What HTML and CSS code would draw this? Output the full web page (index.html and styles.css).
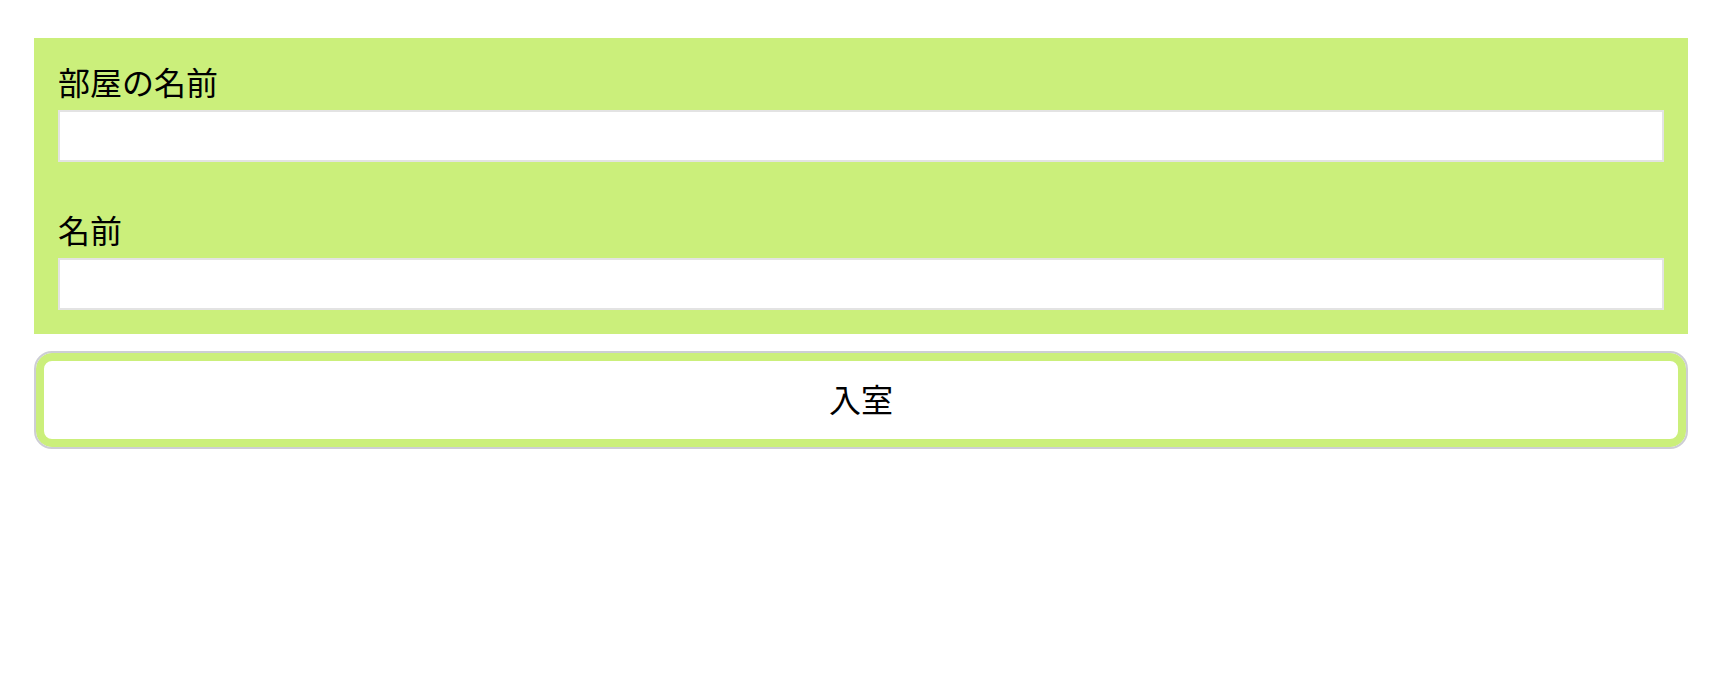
FILE: index.html
```html
<!DOCTYPE html>
<html lang="ja">
<head>
<meta charset="utf-8">
<title>入室</title>
<link rel="stylesheet" href="styles.css">
</head>
<body>
<main class="page">
  <form class="entry">
    <div class="panel">
      <div class="field">
        <label class="label" for="room">部屋の名前</label>
        <input class="input" id="room" type="text">
      </div>
      <div class="field">
        <label class="label" for="name">名前</label>
        <input class="input" id="name" type="text">
      </div>
    </div>
    <button class="enter" type="button">入室</button>
  </form>
</main>
</body>
</html>
```

FILE: styles.css
```css
html, body {
  margin: 0;
  padding: 0;
  background: #ffffff;
}

body {
  font-family: "Noto Sans CJK JP", "Noto Sans", sans-serif;
  color: #000;
}

.page {
  padding: 38px 40px 0 34px;
}

.entry {
  display: flex;
  flex-direction: column;
  gap: 17px;
}

.panel {
  background: #cbef7b;
  padding: 24px;
  display: flex;
  flex-direction: column;
  gap: 48px;
}

.field {
  display: flex;
  flex-direction: column;
}

.label {
  font-size: 32px;
  line-height: 39px;
  height: 48px;
}

.input {
  box-sizing: border-box;
  height: 52px;
  margin: 0;
  border: 2px solid #e3e3e3;
  background: #fff;
  font-size: 24px;
  padding: 0 10px;
  outline: none;
}

.enter {
  box-sizing: border-box;
  height: 98px;
  width: 100%;
  margin: 0;
  padding: 0 0 5px;
  border: 2px solid #cdced4;
  border-radius: 18px;
  background: #fff;
  box-shadow: inset 0 0 0 8px #cbef7b;
  font-family: "Noto Sans CJK JP", "Noto Sans", sans-serif;
  font-size: 32px;
  color: #000;
  cursor: pointer;
}
```
